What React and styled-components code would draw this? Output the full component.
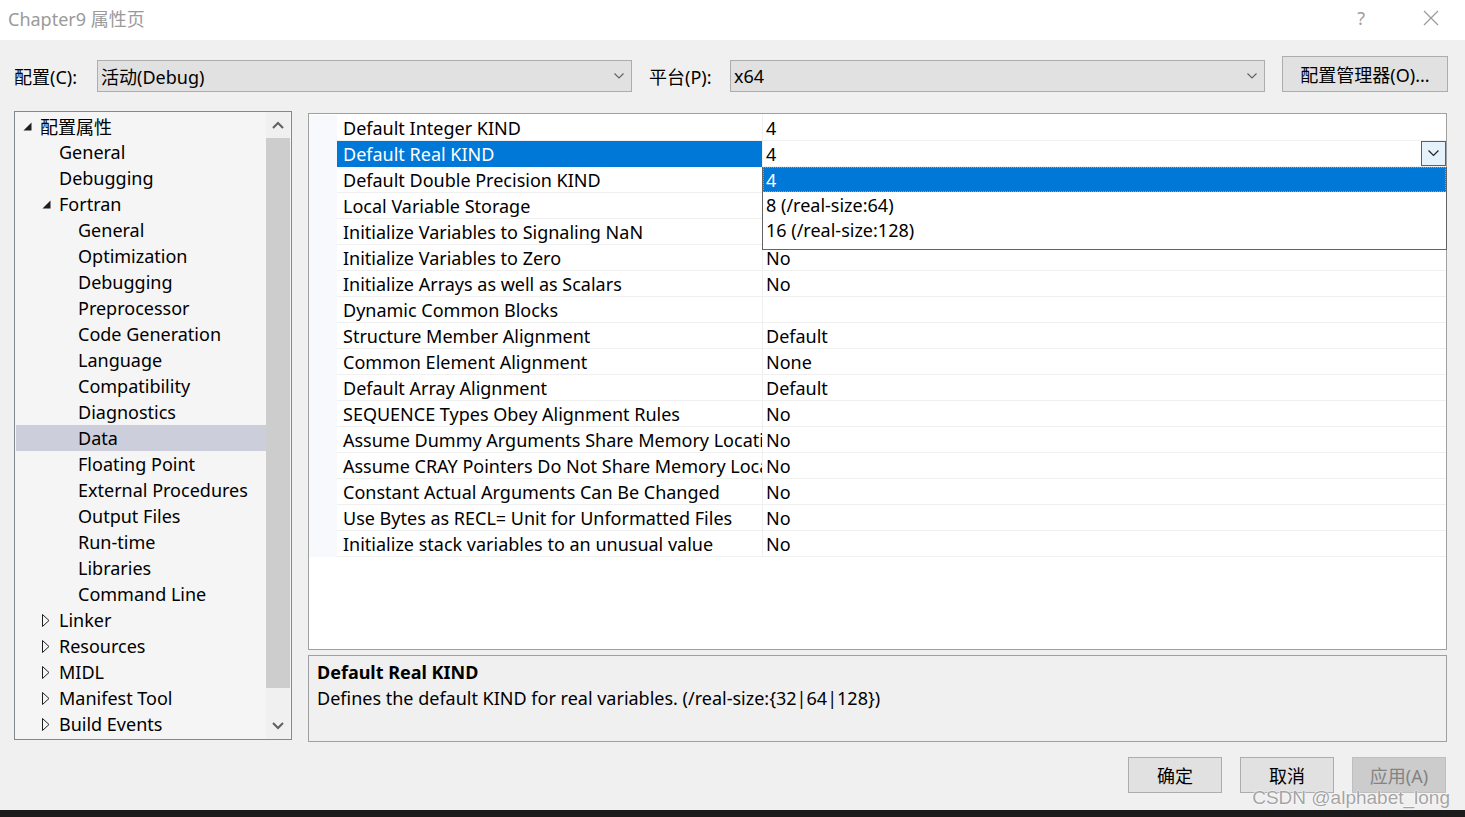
import React from 'react'
import styled, { createGlobalStyle } from 'styled-components'

const GlobalStyle = createGlobalStyle`
  html, body { margin: 0; padding: 0; }
  body {
    font-family: "Noto Sans", "Noto Sans CJK SC", sans-serif;
    color: #000;
  }
`

const Window = styled.div`
  position: relative;
  width: 1465px;
  height: 817px;
  background: #f0f0f0;
  display: flex;
  flex-direction: column;
  overflow: hidden;
`

const TitleBar = styled.div`
  height: 40px;
  box-sizing: border-box;
  flex: none;
  background: #fff;
  display: flex;
  align-items: center;
  justify-content: space-between;
  padding: 0 0 5px 8px;
`

const Title = styled.div`
  font-size: 18px;
  color: #9a9a9a;
`

const TitleTools = styled.div`
  display: flex;
  align-items: center;
  gap: 58px;
  padding-right: 26px;
  color: #a0a0a0;
  font-size: 18px;
`

const ConfigRow = styled.div`
  margin-top: 16px;
  height: 36px;
  flex: none;
  display: flex;
  align-items: flex-end;
  padding: 0 18px 0 14px;
`

const Label = styled.div`
  width: ${(p) => p.$w}px;
  height: 32px;
  display: flex;
  align-items: center;
  font-size: 18px;
  flex: none;
`

const Combo = styled.div`
  width: ${(p) => p.$w}px;
  height: 32px;
  box-sizing: border-box;
  background: #e1e1e1;
  border: 1px solid #adadad;
  display: flex;
  align-items: center;
  justify-content: space-between;
  padding: 0 7px 0 3px;
  font-size: 18px;
  flex: none;
  margin-right: ${(p) => p.$mr || 0}px;
`

const Button = styled.div`
  width: ${(p) => p.$w || 94}px;
  height: 36px;
  box-sizing: border-box;
  background: ${(p) => (p.$disabled ? '#cccccc' : '#e1e1e1')};
  border: 1px solid ${(p) => (p.$disabled ? '#bfbfbf' : '#adadad')};
  color: ${(p) => (p.$disabled ? '#838383' : '#000')};
  display: flex;
  align-items: center;
  justify-content: center;
  font-size: 18px;
  flex: none;
`

const Main = styled.div`
  margin-top: 19px;
  height: 631px;
  flex: none;
  display: flex;
  align-items: flex-start;
  padding-left: 14px;
  gap: 16px;
`

const Tree = styled.div`
  width: 278px;
  height: 629px;
  flex: none;
  box-sizing: border-box;
  border: 1px solid #828790;
  background: #f5f5f5;
  display: flex;
`

const TreeList = styled.div`
  flex: 1;
  padding: 1px 0 0 1px;
`

const TreeRow = styled.div`
  height: 26px;
  display: flex;
  align-items: center;
  position: relative;
  padding-left: ${(p) => 24 + p.$level * 19}px;
  font-size: 18px;
  background: ${(p) => (p.$selected ? '#cccedb' : 'transparent')};
  white-space: nowrap;
`

const Toggle = styled.span`
  position: absolute;
  left: ${(p) => 7 + p.$level * 19}px;
  top: 0;
  height: 26px;
  display: flex;
  align-items: center;
`

const ScrollBar = styled.div`
  width: 24px;
  flex: none;
  background: #f0f0f0;
  display: flex;
  flex-direction: column;
  align-items: stretch;
  margin-right: 1px;
`

const ScrollArrow = styled.div`
  height: 26px;
  flex: none;
  display: flex;
  align-items: center;
  justify-content: center;
  margin-top: ${(p) => (p.$end ? 'auto' : '0')};
`

const ScrollThumb = styled.div`
  flex: none;
  height: 550px;
  background: #cdcdcd;
`

const RightCol = styled.div`
  width: 1139px;
  flex: none;
  padding-top: 2px;
  display: flex;
  flex-direction: column;
  gap: 5px;
`

const Grid = styled.div`
  height: 537px;
  flex: none;
  box-sizing: border-box;
  border: 1px solid #a0a0a0;
  background: #fff;
  padding-top: 1px;
`

const GridRow = styled.div`
  display: grid;
  grid-template-columns: 28px 425px 1fr;
  height: 26px;
  font-size: 18px;
`

const Gutter = styled.div`
  background: #f7f9fc;
`

const NameCell = styled.div`
  background: ${(p) => (p.$selected ? '#0078d7' : '#fff')};
  color: ${(p) => (p.$selected ? '#fff' : '#000')};
  border-bottom: 1px solid ${(p) => (p.$selected ? '#0078d7' : '#f0f0f0')};
  padding: 0 1px 0 6px;
  display: flex;
  align-items: center;
  white-space: nowrap;
  overflow: hidden;
`

const ValueCell = styled.div`
  position: relative;
  border-left: 1px solid #f0f0f0;
  border-bottom: 1px solid #f0f0f0;
  padding-left: 3px;
  display: flex;
  align-items: center;
  white-space: nowrap;
`

const DropButton = styled.div`
  position: absolute;
  right: 0;
  top: 0;
  width: 25px;
  height: 25px;
  box-sizing: border-box;
  background: #e5f1fb;
  border: 1px solid #0078d7;
  display: flex;
  align-items: center;
  justify-content: center;
`

const DropList = styled.div`
  position: absolute;
  left: -1px;
  right: -1px;
  top: 26px;
  height: 83px;
  box-sizing: border-box;
  background: #fff;
  border: 1px solid #646464;
  border-top: none;
  z-index: 2;
`

const DropItem = styled.div`
  height: 25px;
  box-sizing: border-box;
  display: flex;
  align-items: center;
  padding-left: 2px;
  font-size: 18px;
  background: ${(p) => (p.$active ? '#0078d7' : '#fff')};
  color: ${(p) => (p.$active ? '#fff' : '#000')};
  border: 1px dotted ${(p) => (p.$active ? '#f08a24' : 'transparent')};
`

const Description = styled.div`
  height: 87px;
  flex: none;
  box-sizing: border-box;
  border: 1px solid #a0a0a0;
  background: #f0f0f0;
  padding: 3px 8px;
  font-size: 18px;
  line-height: 26px;
`

const DescTitle = styled.div`
  font-weight: bold;
`

const Footer = styled.div`
  margin-top: 15px;
  height: 36px;
  flex: none;
  display: flex;
  justify-content: flex-end;
  gap: 18px;
  padding-right: 19px;
`

const Console = styled.div`
  margin-top: auto;
  height: 7px;
  flex: none;
  background: #1b1b1b;
`

const Watermark = styled.div`
  position: absolute;
  right: 15px;
  bottom: 8px;
  font-family: "Liberation Sans", Arial, sans-serif;
  font-size: 19px;
  color: #a4a4a4;
  text-shadow: 0 0 1px #fff, 0 0 1px #fff, 0 0 2px #fff;
`

const Chevron = ({ color = '#606060', w = 10 }) => (
  <svg width={w} height={w * 0.6} viewBox="0 0 10 6">
    <path d="M0.5 0.5 L5 5 L9.5 0.5" fill="none" stroke={color} strokeWidth="1.1" />
  </svg>
)

const ChevronUp = () => (
  <svg width="12" height="8" viewBox="0 0 12 8">
    <path d="M1 7 L6 2 L11 7" fill="none" stroke="#606060" strokeWidth="2" />
  </svg>
)

const ChevronDown = () => (
  <svg width="12" height="8" viewBox="0 0 12 8">
    <path d="M1 1 L6 6 L11 1" fill="none" stroke="#606060" strokeWidth="2" />
  </svg>
)

const Expanded = () => (
  <svg width="9" height="9" viewBox="0 0 9 9">
    <path d="M8.5 0.5 L8.5 8.5 L0.5 8.5 Z" fill="#1e1e1e" />
  </svg>
)

const Collapsed = () => (
  <svg width="8" height="13" viewBox="0 0 8 13">
    <path d="M0.5 0.5 L7 6.5 L0.5 12.5 Z" fill="none" stroke="#1e1e1e" strokeWidth="1" />
  </svg>
)

const CloseIcon = () => (
  <svg width="16" height="16" viewBox="0 0 16 16">
    <path d="M1 1 L15 15 M15 1 L1 15" stroke="#9a9a9a" strokeWidth="1.2" />
  </svg>
)

const treeItems = [
  { label: '配置属性', level: 0, toggle: 'open' },
  { label: 'General', level: 1 },
  { label: 'Debugging', level: 1 },
  { label: 'Fortran', level: 1, toggle: 'open' },
  { label: 'General', level: 2 },
  { label: 'Optimization', level: 2 },
  { label: 'Debugging', level: 2 },
  { label: 'Preprocessor', level: 2 },
  { label: 'Code Generation', level: 2 },
  { label: 'Language', level: 2 },
  { label: 'Compatibility', level: 2 },
  { label: 'Diagnostics', level: 2 },
  { label: 'Data', level: 2, selected: true },
  { label: 'Floating Point', level: 2 },
  { label: 'External Procedures', level: 2 },
  { label: 'Output Files', level: 2 },
  { label: 'Run-time', level: 2 },
  { label: 'Libraries', level: 2 },
  { label: 'Command Line', level: 2 },
  { label: 'Linker', level: 1, toggle: 'closed' },
  { label: 'Resources', level: 1, toggle: 'closed' },
  { label: 'MIDL', level: 1, toggle: 'closed' },
  { label: 'Manifest Tool', level: 1, toggle: 'closed' },
  { label: 'Build Events', level: 1, toggle: 'closed' },
]

const properties = [
  ['Default Integer KIND', '4'],
  ['Default Real KIND', '4', true],
  ['Default Double Precision KIND', '8'],
  ['Local Variable Storage', 'Default Local Storage'],
  ['Initialize Variables to Signaling NaN', 'No'],
  ['Initialize Variables to Zero', 'No'],
  ['Initialize Arrays as well as Scalars', 'No'],
  ['Dynamic Common Blocks', ''],
  ['Structure Member Alignment', 'Default'],
  ['Common Element Alignment', 'None'],
  ['Default Array Alignment', 'Default'],
  ['SEQUENCE Types Obey Alignment Rules', 'No'],
  ['Assume Dummy Arguments Share Memory Locations', 'No'],
  ['Assume CRAY Pointers Do Not Share Memory Locations', 'No'],
  ['Constant Actual Arguments Can Be Changed', 'No'],
  ['Use Bytes as RECL= Unit for Unformatted Files', 'No'],
  ['Initialize stack variables to an unusual value', 'No'],
]

const options = ['4', '8 (/real-size:64)', '16 (/real-size:128)']

export default function App() {
  return (
    <Window>
      <GlobalStyle />
      <TitleBar>
        <Title>Chapter9 属性页</Title>
        <TitleTools>
          <span>?</span>
          <CloseIcon />
        </TitleTools>
      </TitleBar>

      <ConfigRow>
        <Label $w={83}>配置(C):</Label>
        <Combo $w={535} $mr={17}>
          <span>活动(Debug)</span>
          <Chevron />
        </Combo>
        <Label $w={81}>平台(P):</Label>
        <Combo $w={535} $mr={17}>
          <span>x64</span>
          <Chevron />
        </Combo>
        <Button $w={166}>配置管理器(O)...</Button>
      </ConfigRow>

      <Main>
        <Tree>
          <TreeList>
            {treeItems.map((item, i) => (
              <TreeRow key={i} $level={item.level} $selected={item.selected}>
                {item.toggle && (
                  <Toggle $level={item.level}>
                    {item.toggle === 'open' ? <Expanded /> : <Collapsed />}
                  </Toggle>
                )}
                {item.label}
              </TreeRow>
            ))}
          </TreeList>
          <ScrollBar>
            <ScrollArrow>
              <ChevronUp />
            </ScrollArrow>
            <ScrollThumb />
            <ScrollArrow $end>
              <ChevronDown />
            </ScrollArrow>
          </ScrollBar>
        </Tree>

        <RightCol>
          <Grid>
            {properties.map(([name, value, selected], i) => (
              <GridRow key={i}>
                <Gutter />
                <NameCell $selected={selected}>{name}</NameCell>
                <ValueCell>
                  {value}
                  {selected && (
                    <>
                      <DropButton>
                        <Chevron color="#222" w={11} />
                      </DropButton>
                      <DropList>
                        {options.map((o, j) => (
                          <DropItem key={j} $active={j === 0}>
                            {o}
                          </DropItem>
                        ))}
                      </DropList>
                    </>
                  )}
                </ValueCell>
              </GridRow>
            ))}
          </Grid>
          <Description>
            <DescTitle>Default Real KIND</DescTitle>
            <div>Defines the default KIND for real variables. (/real-size:{'{'}32|64|128{'}'})</div>
          </Description>
        </RightCol>
      </Main>

      <Footer>
        <Button>确定</Button>
        <Button>取消</Button>
        <Button $disabled>应用(A)</Button>
      </Footer>
      <Console />
      <Watermark>CSDN @alphabet_long</Watermark>
    </Window>
  )
}
